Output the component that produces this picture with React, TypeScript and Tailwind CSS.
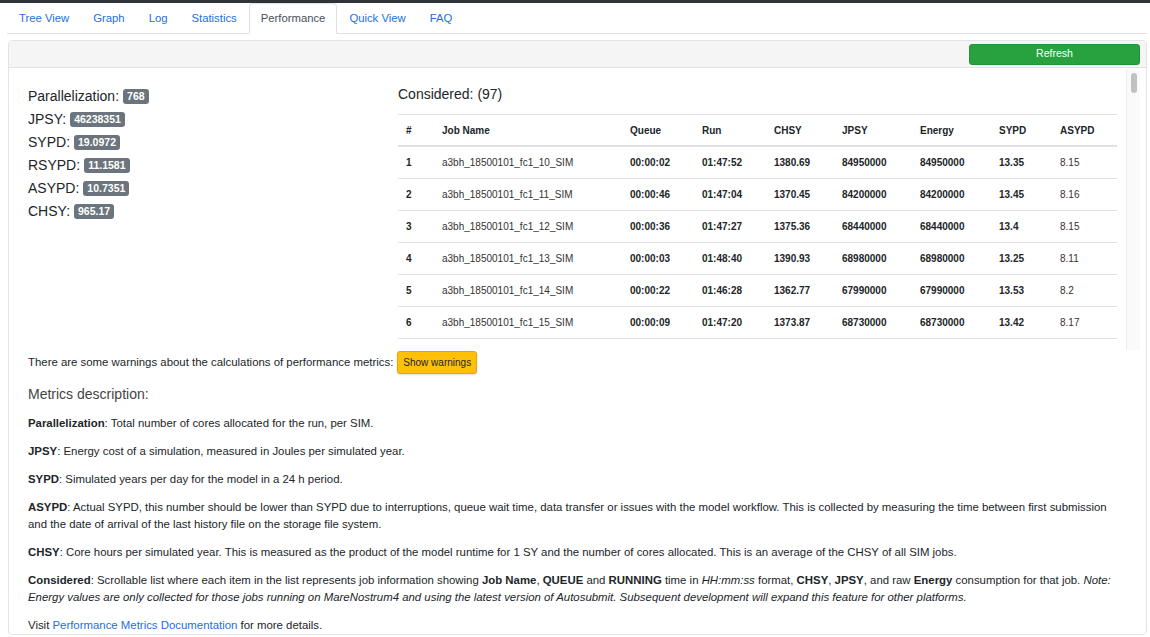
import React from 'react';

const tabs = ['Tree View', 'Graph', 'Log', 'Statistics', 'Performance', 'Quick View', 'FAQ'];

const metrics: [string, string][] = [
  ['Parallelization', '768'],
  ['JPSY', '46238351'],
  ['SYPD', '19.0972'],
  ['RSYPD', '11.1581'],
  ['ASYPD', '10.7351'],
  ['CHSY', '965.17'],
];

const rows = [
  ['1', 'a3bh_18500101_fc1_10_SIM', '00:00:02', '01:47:52', '1380.69', '84950000', '84950000', '13.35', '8.15'],
  ['2', 'a3bh_18500101_fc1_11_SIM', '00:00:46', '01:47:04', '1370.45', '84200000', '84200000', '13.45', '8.16'],
  ['3', 'a3bh_18500101_fc1_12_SIM', '00:00:36', '01:47:27', '1375.36', '68440000', '68440000', '13.4', '8.15'],
  ['4', 'a3bh_18500101_fc1_13_SIM', '00:00:03', '01:48:40', '1390.93', '68980000', '68980000', '13.25', '8.11'],
  ['5', 'a3bh_18500101_fc1_14_SIM', '00:00:22', '01:46:28', '1362.77', '67990000', '67990000', '13.53', '8.2'],
  ['6', 'a3bh_18500101_fc1_15_SIM', '00:00:09', '01:47:20', '1373.87', '68730000', '68730000', '13.42', '8.17'],
  ['7', 'a3bh_18500101_fc1_16_SIM', '00:00:05', '01:47:11', '1371.95', '68610000', '68610000', '13.43', '8.14'],
];

const cols = ['#', 'Job Name', 'Queue', 'Run', 'CHSY', 'JPSY', 'Energy', 'SYPD', 'ASYPD'];
const widths = ['w-[36px]', 'w-[188px]', 'w-[72px]', 'w-[72px]', 'w-[68px]', 'w-[78px]', 'w-[79px]', 'w-[61px]', 'w-[65px]'];

export default function App() {
  return (
    <div className="w-[1150px] h-[637px] overflow-hidden bg-white text-[#212529] font-['Liberation_Sans',Arial,sans-serif]">
      <div className="h-[3px] bg-[#2f3237]" />
      <div className="pl-[7px] pr-[3px]">
        <div className="flex h-[31px] border-b border-[#dee2e6] text-[11.3px]">
          {tabs.map((t) =>
            t === 'Performance' ? (
              <div key={t} className="px-[11px] flex items-center border border-[#dee2e6] border-b-white rounded-t bg-white text-[#495057] -mb-px">
                {t}
              </div>
            ) : (
              <div key={t} className="px-[11px] flex items-center text-[#1b6fe0] border border-transparent">
                {t}
              </div>
            )
          )}
        </div>

        <div className="mt-[6px] ml-px border border-[#e3e3e3] rounded-sm">
          <div className="h-[27px] bg-[#f5f5f5] border-b border-[#e3e3e3] flex items-center justify-end pr-[6px]">
            <button className="w-[171px] h-[21px] bg-[#28a23e] border border-[#24913a] rounded-[3px] text-white text-[10.5px]">
              Refresh
            </button>
          </div>

          <div className="flex pl-[19px] pr-[6px]">
            <div className="w-[370px] pt-[19px] flex flex-col gap-[3.5px]">
              {metrics.map(([k, v]) => (
                <div key={k} className="flex items-center text-[14px] h-[19.5px]">
                  <span>{k}:</span>
                  <span className="ml-[4px] bg-[#6c757d] text-white text-[10.5px] font-bold rounded-[3px] px-[4px] h-[15px] leading-[15px]">
                    {v}
                  </span>
                </div>
              ))}
            </div>

            <div className="flex-1 h-[280px] mt-[2px] overflow-hidden flex">
              <div className="w-[719px]">
                <div className="pt-[14px] text-[14px] h-[44px]">Considered: (97)</div>
                <div className="border-t border-[#dee2e6]">
                  <div className="flex h-[32px] items-center border-b-2 border-[#dee2e6] text-[10px] font-bold">
                    {cols.map((c, i) => (
                      <div key={c} className={`${widths[i]} pl-[8px] shrink-0`}>{c}</div>
                    ))}
                  </div>
                  {rows.map((r) => (
                    <div key={r[0]} className="flex h-[32px] items-center border-b border-[#dee2e6] text-[10px]">
                      {r.map((cell, i) => (
                        <div
                          key={i}
                          className={`${widths[i]} pl-[8px] shrink-0 ${i === 1 || i === 8 ? 'font-normal text-[#333]' : 'font-bold'}`}
                        >
                          {cell}
                        </div>
                      ))}
                    </div>
                  ))}
                </div>
              </div>
              <div className="ml-auto w-[14px] h-full bg-[#fafafa] border-l border-[#ececec] flex justify-center pt-[3px]">
                <div className="w-[6px] h-[20px] rounded-full bg-[#c1c1c1]" />
              </div>
            </div>
          </div>

          <div className="px-[19px]">
            <div className="flex items-center mt-[1px] text-[11.4px]">
              <span>There are some warnings about the calculations of performance metrics:</span>
              <button className="ml-[4px] h-[23px] px-[5px] bg-[#ffc107] border border-[#e0a800] rounded-[3px] text-[10px] text-[#212529] shadow-sm">
                Show warnings
              </button>
            </div>

            <div className="mt-[10px] text-[14px] font-light text-[#444]">Metrics description:</div>

            <div className="text-[11.4px] leading-[17px] mt-[10px] flex flex-col gap-[11px]">
              <p><b>Parallelization</b>: Total number of cores allocated for the run, per SIM.</p>
              <p><b>JPSY</b>: Energy cost of a simulation, measured in Joules per simulated year.</p>
              <p><b>SYPD</b>: Simulated years per day for the model in a 24 h period.</p>
              <p>
                <b>ASYPD</b>: Actual SYPD, this number should be lower than SYPD due to interruptions, queue wait time, data transfer or issues with the model workflow. This is collected by measuring the time between first submission and the date of arrival of the last history file on the storage file system.
              </p>
              <p>
                <b>CHSY</b>: Core hours per simulated year. This is measured as the product of the model runtime for 1 SY and the number of cores allocated. This is an average of the CHSY of all SIM jobs.
              </p>
              <p>
                <b>Considered</b>: Scrollable list where each item in the list represents job information showing <b>Job Name</b>, <b>QUEUE</b> and <b>RUNNING</b> time in <i>HH:mm:ss</i> format, <b>CHSY</b>, <b>JPSY</b>, and raw <b>Energy</b> consumption for that job. <i>Note: Energy values are only collected for those jobs running on MareNostrum4 and using the latest version of Autosubmit. Subsequent development will expand this feature for other platforms.</i>
              </p>
              <p>
                Visit <span className="text-[#1b6fe0]">Performance Metrics Documentation</span> for more details.
              </p>
            </div>
          </div>
        </div>
      </div>
    </div>
  );
}
